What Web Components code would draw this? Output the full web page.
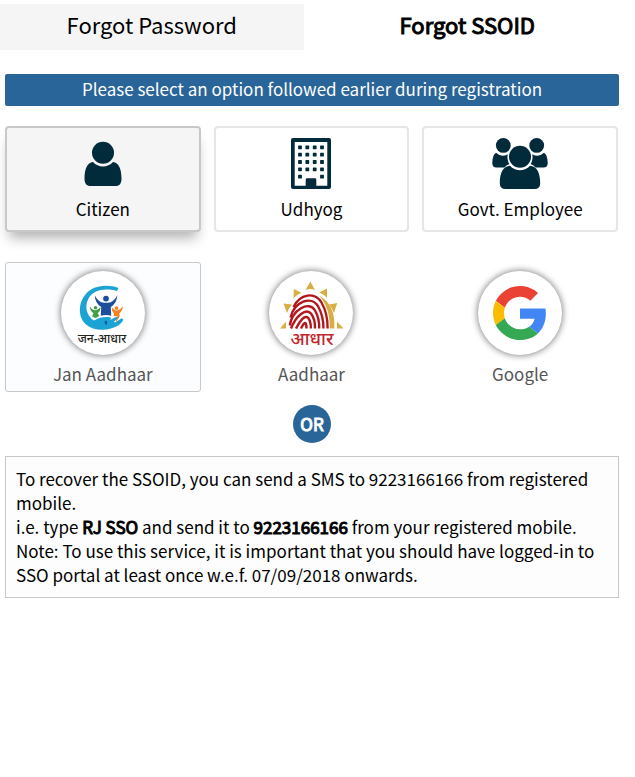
<!DOCTYPE html>
<html lang="en">
<head>
<meta charset="utf-8">
<meta name="viewport" content="width=device-width, initial-scale=1">
<title>Forgot SSOID</title>
<style>
  body {
    margin: 0;
    background: #fff;
    color: #000;
    font: 17px/24px "Noto Sans CJK SC", "Noto Sans", sans-serif;
  }
</style>
</head>
<body>
<recovery-page></recovery-page>

<script>
// icons
const ICONS = {
  citizen: `
    <circle cx="28" cy="14.8" r="11"/>
    <path d="M18 23.9A13.4 13.4 0 0 0 38 23.9C43.8 24.5 46.5 31 46.5 40.5C46.5 45.5 44.5 48 40.5 48H15.5C11.5 48 9.5 45.5 9.5 40.5C9.5 31 12.2 24.5 18 23.9Z"/>`,
  udhyog: `
    <path fill-rule="evenodd" d="M10 0H46Q48 0 48 2V49Q48 51 46 51H10Q8 51 8 49V2Q8 0 10 0ZM11.7 4V47.7H22.7V41.5Q22.7 40.3 24 40.3H32Q33.3 40.3 33.3 41.5V47.7H44.3V4Z"/>
    ${[9.3, 16.7, 24, 31.3, 38.7].map((y, row) =>
      [17, 24.3, 31.7, 39].filter((x, col) => row < 4 || col % 3 === 0).map(x =>
        `<rect x="${x - 1.9}" y="${y - 1.9}" width="3.8" height="3.8" rx="0.6"/>`).join('')).join('')}`,
  govt: `
    <circle cx="11.3" cy="7.4" r="7.4"/>
    <circle cx="44.7" cy="7.4" r="7.4"/>
    <path d="M4 14.8A10 10 0 0 0 15.8 16.2A12.8 12.8 0 0 0 17.4 26Q14 27 12.5 29.5H4.5Q.3 29.5 .3 25Q.3 17 4 14.8Z"/>
    <path d="M52 14.8A10 10 0 0 1 40.2 16.2A12.8 12.8 0 0 1 38.6 26Q42 27 43.5 29.5H51.5Q55.7 29.5 55.7 25Q55.7 17 52 14.8Z"/>
    <circle cx="28" cy="18.8" r="11"/>
    <path d="M18 27.7A13.3 13.3 0 0 0 38 27.7C45 28 48.2 35 48.2 45Q48.2 51 42.5 51H13.5Q7.8 51 7.8 45C7.8 35 11 28 18 27.7Z"/>`
};

const LOGOS = {
  jan: `
    <path fill="#1ba3d6" d="M57.5 17C50 13.8 38 13.5 30 18.5C17 27 15.5 45 25 53.5C31 59 41 59.8 50 57.5C56 56 60 53 62 49.5C62.6 47.7 61 47 59.5 48L54 51.5L53 50.5L58 46.8C58 45.5 56 45.5 54 46.5L49 49C50.5 47.5 50.5 46.5 48.5 46.2C43 45.5 38 46.5 33 49.5C25 44.5 23.5 35 27.5 27.5C32.5 18.8 43 16.8 56 20Z"/>
    <circle cx="45" cy="27.6" r="2.9" fill="#1b4f9e"/>
    <path fill="#1b4f9e" d="M33.8 24.5Q37.5 31.3 43 31.8H47Q52.5 31.3 56.2 24.5Q56 32 49.8 36L50.2 44.8Q45 43.2 39.8 44.8L40.2 36Q34 32 33.8 24.5ZM43.4 50.5L46 49.8V53.5H44.5Z"/>
    <circle cx="34.5" cy="36.8" r="1.8" fill="#43a047"/>
    <path fill="#43a047" d="M28.8 35.2Q31 39 34.5 39.3Q37.6 39 39.4 36Q39.8 40 36.6 42.2L38.4 45L34.8 47L31 45.4L32.5 42.2Q29 40 28.8 35.2Z"/>
    <circle cx="55.5" cy="37.1" r="1.9" fill="#f58220"/>
    <path fill="#f58220" d="M50.6 35.5Q52.5 39.2 55.5 39.6Q59.5 39 61.8 35Q61.8 40 58.2 42.5L58.8 45L55.5 50.5L54.5 50L57 45.6L52.6 45L53 42.5Q50.5 40 50.6 35.5Z"/>
    <text x="41" y="72" font-size="12" font-weight="500" fill="#222" text-anchor="middle">जन-आधार</text>`,
  aadhaar: `
    <g fill="#d6ae42">
      <path d="M41.3 10.5L46 19Q41.3 17.2 36.6 19Z"/>
      <path d="M24.8 18L32.5 21.8Q28 23.5 24.6 27.2Z"/>
      <path d="M58 17.5L58 26.6Q54.5 23 50.2 21.6Z"/>
      <path d="M14.5 32.5L23 33.5Q19.5 37.5 18 42Z"/>
      <path d="M68.2 32L65 42Q63.2 37 60 33.6Z"/>
      <path d="M11 57.5L17 50.5V57.5Z"/>
      <path d="M74.5 57.5L68 50.5V57.5Z"/>
      <path d="M50.5 25C61 30 66.5 42 65.3 57.5H60.8C61 44 58 33.5 50.5 25Z"/>
    </g>
    <g fill="none" stroke="#b3171d" stroke-width="2.4">
      <path d="M24.5 36C31 22.5 46 20.5 52.5 31.5C56.5 38.5 58.8 48 58.6 57.5"/>
      <path d="M21.5 46.5C25.5 30.5 42.5 24 49.2 35.5C53 42.5 54.6 50 54.4 57.5"/>
      <path d="M20.8 54.5C23 39 40 29 46 39.5C49.2 45 50.4 51 50.2 57.5"/>
      <path d="M22 57.5C27 45 37 36.5 42 42.5C45 46.5 46.2 52 46 57.5"/>
      <path d="M27 57.5C31 49.5 36 43.5 39.3 47C41.3 50 42 54 41.8 57.5"/>
      <path d="M32 57.5C34 53.5 35.8 50.5 36.8 52.5C37.5 54.5 37.6 56 37.5 57.5"/>
    </g>
    <text x="43" y="74" font-size="18" font-weight="500" fill="#c1272d" text-anchor="middle">आधार</text>`,
  google: `
    <g transform="translate(15 15) scale(1.125)">
      <path fill="#ea4335" d="M24 9.5c3.54 0 6.71 1.22 9.21 3.6l6.85-6.85C35.9 2.38 30.47 0 24 0 14.62 0 6.51 5.38 2.56 13.22l7.98 6.19C12.43 13.72 17.74 9.5 24 9.5z"/>
      <path fill="#4285f4" d="M46.98 24.55c0-1.57-.15-3.09-.38-4.55H24v9.02h12.94c-.58 2.96-2.26 5.48-4.78 7.18l7.73 6c4.51-4.18 7.09-10.36 7.09-17.65z"/>
      <path fill="#fbbc05" d="M10.53 28.59c-.48-1.45-.76-2.99-.76-4.59s.27-3.14.76-4.59l-7.98-6.19C.92 16.46 0 20.12 0 24c0 3.88.92 7.54 2.56 10.78l7.97-6.19z"/>
      <path fill="#34a853" d="M24 48c6.48 0 11.93-2.13 15.89-5.81l-7.73-6c-2.15 1.45-4.92 2.3-8.16 2.3-6.26 0-11.57-4.22-13.47-9.91l-7.98 6.19C6.51 42.62 14.62 48 24 48z"/>
    </g>`
};

// tab
class RecoveryTab extends HTMLElement {
  constructor() {
    super();
    this.attachShadow({ mode: 'open' });
  }

  connectedCallback() {
    const active = this.hasAttribute('active');
    this.shadowRoot.innerHTML = `
      <style>
        :host { display: block; flex: 1; }
        button {
          display: block; width: 100%; padding: 4px 0 10px; border: 0;
          background: #f5f5f5; color: inherit;
          font: inherit; font-size: 22px; line-height: 32px; cursor: pointer;
        }
        :host([active]) button { background: #fff; -webkit-text-stroke: 1px #000; }
      </style>
      <button type="button" aria-pressed="${active}"><slot></slot></button>
    `;
  }
}

// user type card
class TypeCard extends HTMLElement {
  constructor() {
    super();
    this.attachShadow({ mode: 'open' });
  }

  connectedCallback() {
    this.shadowRoot.innerHTML = `
      <style>
        :host { display: block; }
        button {
          display: flex; flex-direction: column; align-items: center; gap: 7px;
          box-sizing: border-box; width: 100%; padding: 10px 0 9px;
          border: 2px solid #e6e6e6; border-radius: 4px;
          background: #fff; color: inherit; font: inherit; cursor: pointer;
        }
        :host([selected]) button {
          background: #f5f5f5; border-color: #c8c8c8;
          box-shadow: 0 10px 12px -4px rgba(0, 0, 0, 0.3);
        }
        svg { display: block; fill: #012a3a; }
      </style>
      <button type="button" aria-pressed="${this.hasAttribute('selected')}">
        <svg width="56" height="52" viewBox="0 0 56 52" aria-hidden="true">${ICONS[this.getAttribute('icon')]}</svg>
        <slot></slot>
      </button>
    `;
  }
}

// identity provider
class ProviderOption extends HTMLElement {
  constructor() {
    super();
    this.attachShadow({ mode: 'open' });
  }

  connectedCallback() {
    this.shadowRoot.innerHTML = `
      <style>
        :host { display: block; }
        button {
          display: flex; flex-direction: column; align-items: center; gap: 7px;
          box-sizing: border-box; width: 100%; padding: 8px 0 5px;
          border: 1px solid transparent; border-radius: 3px;
          background: none; color: #555; font: inherit; cursor: pointer;
        }
        :host([selected]) button { background: #fbfdff; border-color: #c8c8c8; }
        svg {
          display: block; border-radius: 50%; background: #fff;
          box-shadow: 0 0 6px 1px rgba(0, 0, 0, 0.45);
        }
        text { font-family: "Noto Sans", sans-serif; }
      </style>
      <button type="button" aria-pressed="${this.hasAttribute('selected')}">
        <svg width="84" height="84" viewBox="0 0 84 84" aria-hidden="true">${LOGOS[this.getAttribute('logo')]}</svg>
        <slot></slot>
      </button>
    `;
  }
}

class OrDivider extends HTMLElement {
  constructor() {
    super();
    this.attachShadow({ mode: 'open' });
    this.shadowRoot.innerHTML = `
      <style>
        :host { display: flex; justify-content: center; }
        span {
          width: 38px; height: 38px; border-radius: 50%;
          background: #2a6599; color: #fff;
          line-height: 38px; text-align: center; -webkit-text-stroke: 1px #fff;
        }
      </style>
      <span><slot></slot></span>
    `;
  }
}

class SmsNote extends HTMLElement {
  constructor() {
    super();
    this.attachShadow({ mode: 'open' });
    this.shadowRoot.innerHTML = `
      <style>
        :host { display: block; padding: 10px; border: 1px solid #c8c8c8; background: #fdfdfd; }
        p { margin: 0; }
        strong { font-weight: 400; -webkit-text-stroke: 1px #000; }
      </style>
      <p>To recover the SSOID, you can send a SMS to 9223166166 from registered mobile.</p>
      <p>i.e. type <strong>RJ SSO</strong> and send it to <strong>9223166166</strong> from your registered mobile.</p>
      <p>Note: To use this service, it is important that you should have logged-in to SSO portal at least once w.e.f. 07/09/2018 onwards.</p>
    `;
  }
}

// page
class RecoveryPage extends HTMLElement {
  constructor() {
    super();
    this.attachShadow({ mode: 'open' });
    this.shadowRoot.innerHTML = `
      <style>
        :host { display: block; padding: 4px 16px 0 0; }
        nav { display: flex; gap: 12px; }
        main { display: flex; flex-direction: column; padding: 24px 0 0 5px; }
        h1 {
          margin: 0 0 20px; padding: 3px 0 5px; border-radius: 2px;
          background: #2a6599; color: #fff;
          font: inherit; text-align: center;
        }
        .row { display: grid; grid-template-columns: repeat(3, 1fr); gap: 13px; padding-right: 1px; }
        .types { margin-bottom: 30px; }
        or-divider { margin: 13px 0; }
      </style>
      <nav>
        <recovery-tab>Forgot Password</recovery-tab>
        <recovery-tab active>Forgot SSOID</recovery-tab>
      </nav>
      <main>
        <h1>Please select an option followed earlier during registration</h1>
        <div class="row types">
          <type-card icon="citizen" selected>Citizen</type-card>
          <type-card icon="udhyog">Udhyog</type-card>
          <type-card icon="govt">Govt. Employee</type-card>
        </div>
        <div class="row">
          <provider-option logo="jan" selected>Jan Aadhaar</provider-option>
          <provider-option logo="aadhaar">Aadhaar</provider-option>
          <provider-option logo="google">Google</provider-option>
        </div>
        <or-divider>OR</or-divider>
        <sms-note></sms-note>
      </main>
    `;
  }
}

customElements.define('recovery-tab', RecoveryTab);
customElements.define('type-card', TypeCard);
customElements.define('provider-option', ProviderOption);
customElements.define('or-divider', OrDivider);
customElements.define('sms-note', SmsNote);
customElements.define('recovery-page', RecoveryPage);
</script>
</body>
</html>
